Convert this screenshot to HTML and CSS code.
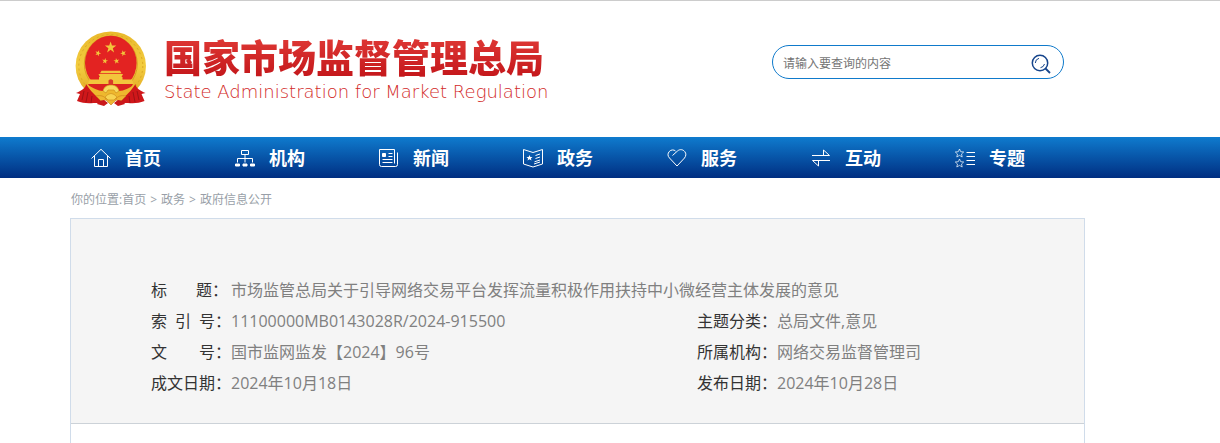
FILE: index.html
```html
<!DOCTYPE html>
<html lang="zh-CN">
<head>
    <meta charset="UTF-8">
    <meta name="viewport" content="width=device-width, initial-scale=1.0">
    <title>国家市场监督管理总局</title>
    <link rel="stylesheet" href="styles.css">
</head>
<body>
    <header class="header">
        <div class="container header-inner">
            <a class="logo" href="#">
                <svg class="emblem" viewBox="9 7 72 76" aria-hidden="true">
                    <defs>
                        <linearGradient id="gold" x1="0" y1="0" x2="0" y2="1">
                            <stop offset="0" stop-color="#e9b92c"/>
                            <stop offset="0.5" stop-color="#f3cc3f"/>
                            <stop offset="1" stop-color="#dfa31f"/>
                        </linearGradient>
                        <path id="star" d="M0-6L1.4-1.9H5.7L2.2.7L3.5 4.9L0 2.3L-3.5 4.9L-2.2.7L-5.7-1.9H-1.4Z"/>
                    </defs>
                    <ellipse cx="44.8" cy="42" rx="35.2" ry="34.6" fill="url(#gold)"/>
                    <ellipse cx="44.8" cy="42" rx="32" ry="31.5" fill="none" stroke="#dba824" stroke-width="1" stroke-dasharray="2 3"/>
                    <ellipse cx="44.8" cy="40" rx="26.5" ry="28" fill="none" stroke="#d9a021" stroke-width="1"/>
                    <ellipse cx="44.8" cy="39" rx="25.8" ry="27.2" fill="#e32322"/>
                    <g fill="#f2c53c">
                        <use href="#star" transform="translate(44.6 23.5)"/>
                        <use href="#star" transform="translate(32 29.3) scale(.52) rotate(20)"/>
                        <use href="#star" transform="translate(57.3 29.3) scale(.52) rotate(-20)"/>
                        <use href="#star" transform="translate(39 37) scale(.52) rotate(10)"/>
                        <use href="#star" transform="translate(50.5 37) scale(.52) rotate(-10)"/>
                        <path d="M35.5 46.8h18.5l1.5 2.5H34zM32.5 50h24.5l-1.5 3H34zM33 53h23.5v2.5H66l1.5 4.5H22l1.5-4.5H33z"/>
                    </g>
                    <path d="M42.5 60v-3.5q2.3-2.5 4.6 0V60z" fill="#d8392a"/>
                    <path d="M22 60h45l-4 7c-8 5-29 5-37 0z" fill="#db2220"/>
                    <path d="M20 60c7 4 12 7 17 7 1-4 4-6 8-6s7 2 8 6c5 0 10-3 17-7l-3 8-11 7H33l-10-7z" fill="#eeb82e"/>
                    <path d="M37 67c1-4 4-6 8-6s7 2 8 6l-3 2-2-3h-6l-2 3z" fill="#f7da60" stroke="#ce901c" stroke-width=".7"/>
                    <path d="M20 60c0 4-5 7-10 9l4 1-3 7c7 3 12 2 22 2l3-5-5-1c-4-4-8-8-11-13zM69.5 60c0 4 5 7 10 9l-4 1 3 7c-7 3-12 2-22 2l-3-5 5-1c4-4 8-8 11-13z" fill="#cf171a"/>
                    <path d="M18 67l-2 9M22 68l-2 10M26 72l-1 7M71 67l2 9M67 68l2 10M63 72l1 7" stroke="#9f1115" stroke-width="1"/>
                    <path d="M30 72c5-1 8 0 10 3h10c2-3 5-4 10-3l-5 5-5-1-5 5-5-5-5 1z" fill="#efb731" stroke="#c77c19" stroke-width=".6"/>
                    <path d="M33 77l5-1 4 3-4 3-7-2zM57 77l-5-1-4 3 4 3 7-2z" fill="#c9181b"/>
                    <path d="M39 73q6-7 12 0l-3 3h-6z" fill="#f7d351" stroke="#c9871a" stroke-width=".6"/>
                </svg>
                <span class="logo-text">
                    <span class="logo-cn">国家市场监督管理总局</span>
                    <span class="logo-en">State Administration for Market Regulation</span>
                </span>
            </a>
            <form class="search">
                <input class="search-input" type="text" placeholder="请输入要查询的内容" aria-label="请输入要查询的内容">
                <button class="search-btn" type="button" aria-label="搜索">
                    <svg viewBox="0 0 20 20" width="20" height="20" fill="none" stroke="#16458c">
                        <circle cx="9" cy="9" r="7.7" stroke-width="1.5"/>
                        <path d="M14.5 14.5L19 19" stroke-width="1.8"/>
                        <path d="M4.3 9A5 5 0 0 1 8 4.3M13.5 10A5 5 0 0 1 9.5 13.7" stroke-width="1"/>
                    </svg>
                </button>
            </form>
        </div>
    </header>

    <nav class="nav">
        <div class="container nav-list">
            <a class="nav-item" href="#">
                <svg class="nav-icon" viewBox="0 0 20 20"><path d="M.5 10.5L10 1.3L19.5 10.5M3.5 8v10.5h13V8M7.5 18.5v-7h5v7"/></svg>
                首页
            </a>
            <a class="nav-item" href="#">
                <svg class="nav-icon" viewBox="0 0 20 20"><path d="M6.5 2.5h7v4h-7zM10 6.5v8M2.5 14.5v-4h15v4"/><path class="fill" d="M.5 16h4v2h-4zM8 16h4v2H8zM15.5 16h4v2h-4z"/></svg>
                机构
            </a>
            <a class="nav-item" href="#">
                <svg class="nav-icon" viewBox="0 0 20 20"><path d="M15.5 15.5V1.5H.5v15q0 2 2 2h14q2 0 2-2V4.5M9.5 5.5h4M9.5 8.5h4M3.5 11.5h10M3.5 14.5h10"/><path class="fill" d="M3.5 5.5h3v3h-3z"/></svg>
                新闻
            </a>
            <a class="nav-item" href="#">
                <svg class="nav-icon" viewBox="0 0 20 20"><path d="M.5 1.5L10 4.5L19.5 1.5V16L10 19L.5 16zM12.5 7.5l4.5-1.5M12.5 10.5l4.5-1.5M11.5 13.8l5.5-1.8M11 16l6-2"/><path class="star" d="M6.5 7l.9 2h2.1l-1.6 1.4.6 2.1-2-1.2-2 1.2.6-2.1L3.5 9h2.1z"/></svg>
                政务
            </a>
            <a class="nav-item" href="#">
                <svg class="nav-icon" viewBox="0 0 20 20"><path d="M5.5 7.5L10.5 3C13 .8 16 1.5 17.7 3.5C19.5 5.7 19 8 17.5 10L10 18L2.5 10C.5 8 .5 5.5 2.3 3.5C4 1.5 7 1.5 8.5 3"/></svg>
                服务
            </a>
            <a class="nav-item" href="#">
                <svg class="nav-icon" viewBox="0 0 20 20"><path d="M1 7.5h17.5L12.5 2v5.5M19 12.5H1.5L7.5 18v-5.5"/></svg>
                互动
            </a>
            <a class="nav-item" href="#">
                <svg class="nav-icon nav-icon-thin" viewBox="0 0 20 20"><path d="M4.5 1l1.2 2.7 3 .3-2.2 2 .7 3-2.7-1.6L1.8 9l.7-3L.3 4l3-.3zM4.5 11l1.2 2.7 3 .3-2.2 2 .7 3-2.7-1.6L1.8 19l.7-3L.3 14l3-.3z"/><path class="bold" d="M11.5 4.5h8.500M11.5 8.5h8.500M11.5 12.5h8.500M11.5 16.5h8.500"/></svg>
                专题
            </a>
        </div>
    </nav>

    <main class="container main">
        <div class="crumbs">你的位置:<a href="#">首页</a><span class="sep">&gt;</span><a href="#">政务</a><span class="sep">&gt;</span><a href="#">政府信息公开</a></div>
        <div class="article">
            <div class="info">
                <table class="info-table">
                    <colgroup>
                        <col class="col-label"><col class="col-value"><col class="col-label"><col>
                    </colgroup>
                    <tr>
                        <th scope="row">标&nbsp;&nbsp;&nbsp;&nbsp;&nbsp;&nbsp;&nbsp;题：</th>
                        <td colspan="3">市场监管总局关于引导网络交易平台发挥流量积极作用扶持中小微经营主体发展的意见</td>
                    </tr>
                    <tr>
                        <th scope="row">索&ensp;引&ensp;号：</th>
                        <td>11100000MB0143028R/2024-915500</td>
                        <th scope="row">主题分类：</th>
                        <td>总局文件,意见</td>
                    </tr>
                    <tr>
                        <th scope="row">文&emsp;&emsp;号：</th>
                        <td>国市监网监发【2024】96号</td>
                        <th scope="row">所属机构：</th>
                        <td>网络交易监督管理司</td>
                    </tr>
                    <tr>
                        <th scope="row">成文日期：</th>
                        <td>2024年10月18日</td>
                        <th scope="row">发布日期：</th>
                        <td>2024年10月28日</td>
                    </tr>
                </table>
            </div>
        </div>
    </main>
</body>
</html>
```

FILE: styles.css
```css
* {
    box-sizing: border-box;
}
body {
    margin: 0;
    min-height: 100vh;
    display: flex;
    flex-direction: column;
    font-family: "Open Sans", "Noto Sans CJK SC", sans-serif;
    background-color: #fff;
    color: #333;
}
a {
    color: inherit;
    text-decoration: none;
}
.container {
    width: 100%;
    max-width: 1080px;
    margin: 0 auto;
}

/* header */
.header {
    border-top: 1px solid #ccc;
}
.header-inner {
    display: flex;
    justify-content: space-between;
    align-items: flex-start;
    padding: 30px 86px 30px 5px;
}
.logo {
    display: flex;
    gap: 17px;
}
.emblem {
    width: 72px;
    height: 76px;
}
.logo-text {
    display: flex;
    flex-direction: column;
    gap: 4px;
    padding-top: 4px;
    white-space: nowrap;
}
.logo-cn {
    font-family: "Noto Sans CJK SC", sans-serif;
    font-size: 38px;
    font-weight: 900;
    line-height: 42px;
    color: transparent;
    background: linear-gradient(#e03a36, #c4171b);
    -webkit-background-clip: text;
    background-clip: text;
}
.logo-en {
    font-family: "DejaVu Sans", sans-serif;
    font-size: 18px;
    font-weight: 200;
    line-height: 22px;
    color: #d22a28;
}
.search {
    display: flex;
    align-items: center;
    width: 292px;
    height: 34px;
    margin-top: 14px;
    padding: 0 12px 0 10px;
    border: 1px solid #0f7acb;
    border-radius: 17px;
}
.search-input {
    flex: 1;
    min-width: 0;
    padding: 2px 0 0;
    border: none;
    outline: none;
    background: none;
    font-family: inherit;
    font-size: 12px;
}
.search-input::placeholder {
    color: #757575;
}
.search-btn {
    display: flex;
    padding: 4px 0 0;
    border: none;
    background: none;
    cursor: pointer;
}

/* navigation */
.nav {
    background: linear-gradient(#0f7bce, #002e81);
}
.nav-list {
    display: flex;
}
.nav-item {
    display: flex;
    align-items: center;
    gap: 14px;
    width: 144px;
    height: 41px;
    padding-left: 21px;
    font-size: 18px;
    font-weight: bold;
    line-height: 44px;
    color: #fff;
}
.nav-icon {
    width: 20px;
    height: 20px;
    fill: none;
    stroke: #fff;
    stroke-width: 1;
}
.nav-icon-thin {
    stroke-width: 0.7;
}
.nav-icon .fill {
    fill: #fff;
}
.nav-icon .star {
    fill: #fff;
    stroke: none;
}
.nav-icon .bold {
    stroke-width: 1;
}

/* content */
.main {
    flex: 1;
    display: flex;
    flex-direction: column;
}
.crumbs {
    padding: 4px 0 0 1px;
    font-size: 12px;
    line-height: 36px;
    color: #999fa8;
}
.sep {
    margin: 0 4px;
}
.article {
    flex: 1;
    width: 94%;
    border: 1px solid #d0dcea;
    border-bottom: none;
}
.info {
    padding: 56px 80px 24px;
    background-color: #f5f5f5;
    border-bottom: 1px solid #ccd2d8;
}
.info-table {
    width: 100%;
    border-collapse: collapse;
    table-layout: fixed;
    font-size: 16px;
    line-height: 31px;
}
.info-table th,
.info-table td {
    padding: 0;
    font-weight: normal;
    text-align: left;
    white-space: nowrap;
}
.info-table td {
    color: #808080;
}
.col-label {
    width: 80px;
}
.col-value {
    width: 466px;
}
```
